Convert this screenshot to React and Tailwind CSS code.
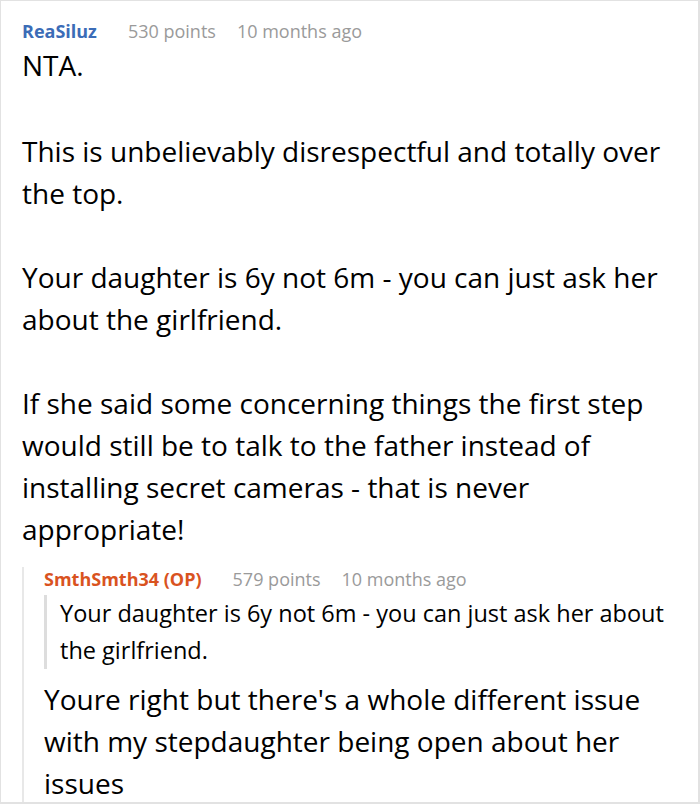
import React from 'react';

const Meta = ({ name, nameColor, points, time }) => (
  <div className="flex items-baseline text-[18px] leading-[24px]">
    <span className={`font-bold ${nameColor} mr-[31px]`}>{name}</span>
    <span className="text-[#9a9a9a] mr-[21px]">{points}</span>
    <span className="text-[#9a9a9a]">{time}</span>
  </div>
);

export default function App() {
  return (
    <div
      className="w-[700px] h-[804px] overflow-hidden bg-white border border-[#e2e2e2] border-r-2 border-b-2 pl-[21px] pr-[16px] pt-[18px]"
      style={{ fontFamily: '"Open Sans", "Noto Sans", sans-serif' }}
    >
      <Meta name="ReaSiluz" nameColor="text-[#3b6cb7]" points="530 points" time="10 months ago" />
      <div className="mt-[1px] text-[28px] leading-[42px] text-black">
        <p className="mb-[44px]">NTA.</p>
        <p className="mb-[42px]">This is unbelievably disrespectful and totally over the top.</p>
        <p className="mb-[42px]">Your daughter is 6y not 6m - you can just ask her about the girlfriend.</p>
        <p>
          If she said some concerning things the first step would still be to talk to the father
          instead of installing secret cameras - that is never appropriate!
        </p>
      </div>

      <div className="mt-[17px] border-l-2 border-[#e8e8e8] pl-[20px] pb-[12px]">
        <Meta name="SmthSmth34 (OP)" nameColor="text-[#d9531f]" points="579 points" time="10 months ago" />
        <div className="mt-[4px] border-l-[3px] border-[#dddddd] pl-[13px] text-[23.5px] leading-[37px] text-black">
          Your daughter is 6y not 6m - you can just ask her about the girlfriend.
        </div>
        <p className="mt-[9px] text-[28px] leading-[42px] text-black">
          Youre right but there's a whole different issue with my stepdaughter being open about
          her issues
        </p>
      </div>
    </div>
  );
}
